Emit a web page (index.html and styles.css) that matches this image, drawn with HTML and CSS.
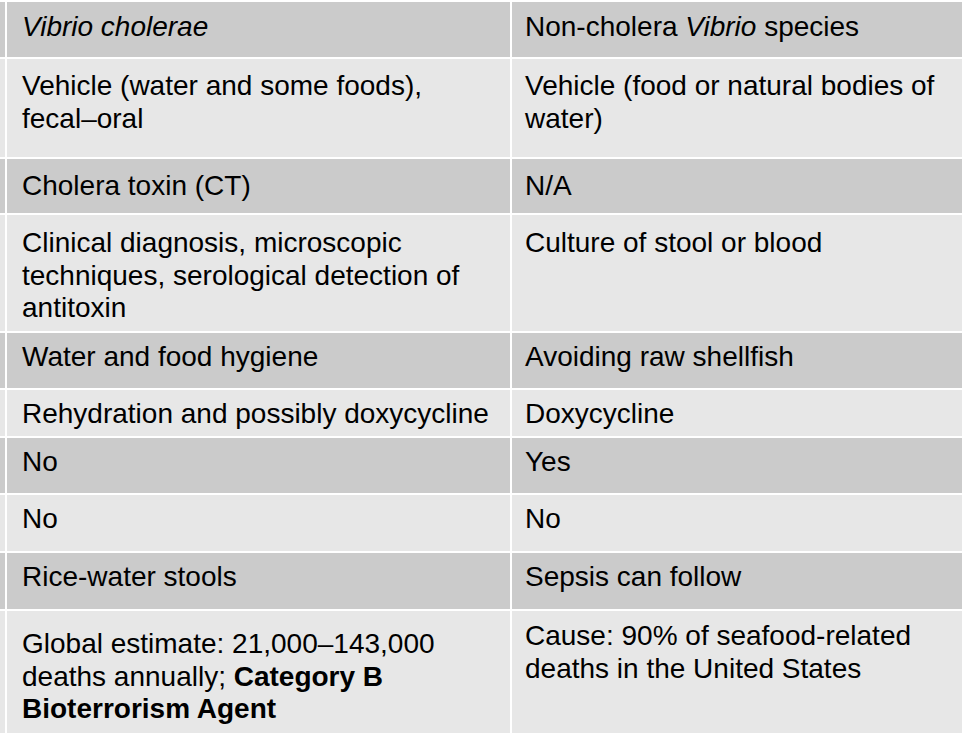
FILE: index.html
```html
<!DOCTYPE html>
<html lang="en">
<head>
<meta charset="utf-8">
<title>Vibrio comparison</title>
<link rel="stylesheet" href="styles.css">
</head>
<body>
<div class="table">
  <div class="cell stub dark"></div>
  <div class="cell left dark pad-9"><em>Vibrio cholerae</em></div>
  <div class="cell right dark pad-9">Non-cholera <em>Vibrio</em> species</div>

  <div class="cell stub light"></div>
  <div class="cell left light pad-11">Vehicle (water and some foods), fecal–oral</div>
  <div class="cell right light pad-11">Vehicle (food or natural bodies of water)</div>

  <div class="cell stub dark"></div>
  <div class="cell left dark pad-11">Cholera toxin (CT)</div>
  <div class="cell right dark pad-11">N/A</div>

  <div class="cell stub light"></div>
  <div class="cell left light pad-12">Clinical diagnosis, microscopic techniques, serological detection of antitoxin</div>
  <div class="cell right light pad-12">Culture of stool or blood</div>

  <div class="cell stub dark"></div>
  <div class="cell left dark">Water and food hygiene</div>
  <div class="cell right dark">Avoiding raw shellfish</div>

  <div class="cell stub light"></div>
  <div class="cell left light">Rehydration and possibly doxycycline</div>
  <div class="cell right light">Doxycycline</div>

  <div class="cell stub dark"></div>
  <div class="cell left dark">No</div>
  <div class="cell right dark">Yes</div>

  <div class="cell stub light"></div>
  <div class="cell left light">No</div>
  <div class="cell right light">No</div>

  <div class="cell stub dark"></div>
  <div class="cell left dark">Rice-water stools</div>
  <div class="cell right dark">Sepsis can follow</div>

  <div class="cell stub light"></div>
  <div class="cell left light pad-17">Global estimate: 21,000–143,000 deaths annually; <strong>Category B Bioterrorism Agent</strong></div>
  <div class="cell right light pad-9">Cause: 90% of seafood-related deaths in the United States</div>
</div>
</body>
</html>
```

FILE: styles.css
```css
html, body {
  margin: 0;
  padding: 0;
  background: #ffffff;
}

body {
  font-family: "Liberation Sans", Arial, sans-serif;
  font-size: 28px;
  line-height: 32.5px;
  color: #000000;
}

.table {
  display: grid;
  grid-template-columns: 5px 503px 450px;
  grid-template-rows: 55px 98px 54px 116px 55px 46px 55px 56px 56px 122px;
  column-gap: 2px;
  row-gap: 2px;
  padding-top: 2px;
  width: 962px;
}

.cell {
  padding-top: 8px;
  overflow: hidden;
}

.cell.left {
  padding-left: 15px;
  padding-right: 12px;
}

.cell.right {
  padding-left: 13px;
  padding-right: 12px;
}

.cell.stub {
  padding: 0;
}

.pad-9 { padding-top: 9px; }
.pad-11 { padding-top: 11px; }
.pad-12 { padding-top: 12px; }
.pad-17 { padding-top: 17px; }

.dark {
  background: #cbcbcb;
}

.light {
  background: #e7e7e7;
}

strong {
  font-weight: bold;
}
```
